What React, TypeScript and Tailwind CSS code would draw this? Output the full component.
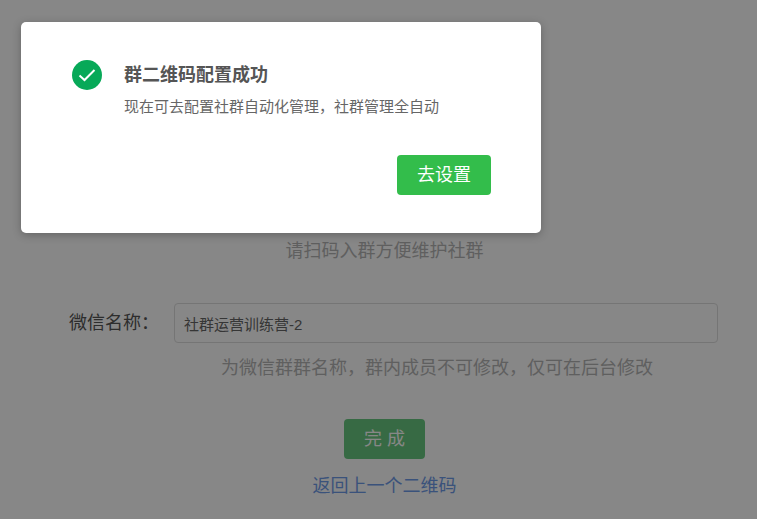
const FONT = "font-['Liberation_Sans','Noto_Sans_CJK_SC',sans-serif]";

const SuccessModal = () => {
  return (
    <div className="absolute left-[21px] top-[22px] w-[520px] h-[211px] bg-white rounded-[5px] shadow-[0_2px_8px_rgba(0,0,0,0.25)] pl-[51px] pr-[50px] pt-[38px]">
      <div className="flex">
        <svg width="30" height="30" viewBox="0 0 30 30" className="shrink-0">
          <circle cx="15" cy="15" r="15" fill="#07a958" />
          <path d="M7.5 15.5l5 4.5L22.5 10" fill="none" stroke="#fff" strokeWidth="2" />
        </svg>
        <div className="ml-[22px]">
          <h2 className="text-[18px] leading-[30px] font-bold text-[#555]">群二维码配置成功</h2>
          <p className="mt-[6px] text-[15px] leading-[22px] text-[#666]">现在可去配置社群自动化管理，社群管理全自动</p>
        </div>
      </div>
      <div className="flex justify-end mt-[37px]">
        <button className="w-[94px] h-[40px] rounded-[4px] bg-[#33bd4b] text-white text-[18px]">去设置</button>
      </div>
    </div>
  );
};

export default function App() {
  return (
    <div className={`relative w-[757px] h-[519px] overflow-hidden bg-white ${FONT}`}>
      <div className="flex flex-col items-center pt-[238px] pl-[12px]">
        <p className="text-[18px] leading-[26px] text-[#b4b4b4]">请扫码入群方便维护社群</p>
        <div className="flex items-center self-stretch mt-[39px] pl-[57px] pr-[39px]">
          <label className="w-[105px] shrink-0 text-[18px] text-[#555]">微信名称：</label>
          <input
            readOnly
            value="社群运营训练营-2"
            className="flex-1 h-[40px] px-[9px] rounded-[4px] border border-[#ddd] text-[15px] text-[#666] outline-none"
          />
        </div>
        <p className="mt-[12px] ml-[105px] text-[18px] leading-[26px] text-[#b4b4b4]">为微信群群名称，群内成员不可修改，仅可在后台修改</p>
        <button className="mt-[38px] w-[81px] h-[40px] rounded-[4px] bg-[#69c980] text-[18px] text-white">完 成</button>
        <a className="mt-[14px] text-[18px] leading-[26px] text-[#6f9be8]">返回上一个二维码</a>
      </div>
      <div className="absolute inset-0 bg-[#000]/47" />
      <SuccessModal />
    </div>
  );
}
